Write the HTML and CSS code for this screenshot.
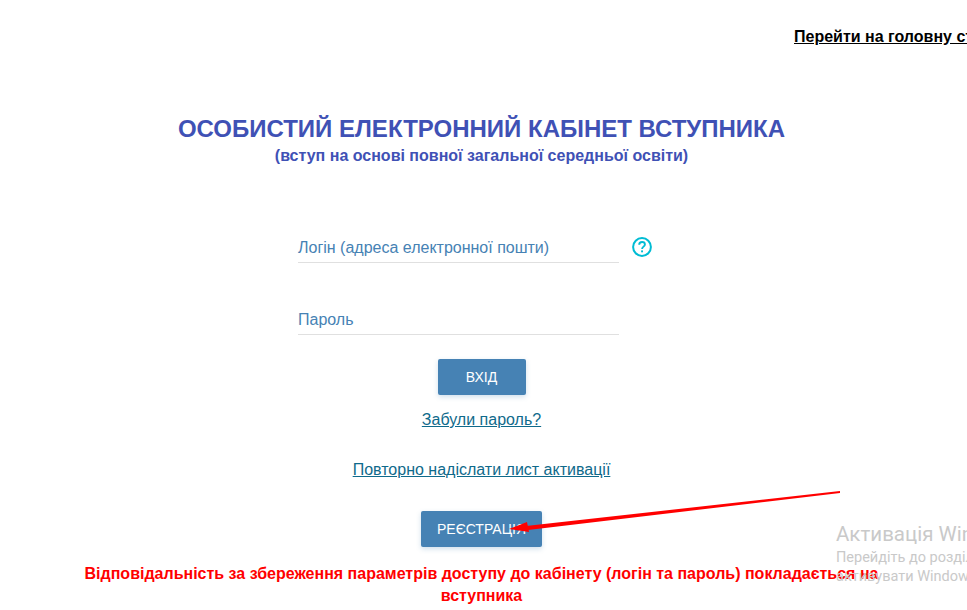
FILE: index.html
```html
<!DOCTYPE html>
<html lang="uk">
<head>
    <meta charset="UTF-8">
    <meta name="viewport" content="width=device-width, initial-scale=1.0">
    <title>Особистий електронний кабінет вступника</title>
    <link rel="stylesheet" href="styles.css">
</head>
<body>
    <div class="top-link">
        <a href="#">Перейти на головну сторінку</a>
    </div>

    <div class="container">
        <h1 class="title">ОСОБИСТИЙ ЕЛЕКТРОННИЙ КАБІНЕТ ВСТУПНИКА</h1>
        <div class="subtitle">(вступ на основі повної загальної середньої освіти)</div>

        <form class="login-form">
            <div class="field">
                <div class="field-label">Логін (адреса електронної пошти)</div>
                <svg class="help-icon" width="20" height="20" viewBox="0 0 20 20" fill="none">
                    <circle cx="10" cy="10" r="8.9" stroke="#00bcd4" stroke-width="2"/>
                    <path d="M7.2 7.8c0-1.7 1.2-2.8 2.9-2.8 1.6 0 2.8 1 2.8 2.4 0 2.2-2.8 2.3-2.8 4.6" stroke="#00bcd4" stroke-width="1.9"/>
                    <rect x="9.1" y="13.4" width="1.9" height="1.9" fill="#00bcd4"/>
                </svg>
            </div>
            <div class="field field-password">
                <div class="field-label">Пароль</div>
            </div>
            <button type="button" class="btn btn-login">ВХІД</button>
            <a class="form-link link-forgot" href="#">Забули пароль?</a>
            <a class="form-link link-resend" href="#">Повторно надіслати лист активації</a>
            <button type="button" class="btn btn-register">РЕЄСТРАЦІЯ</button>
        </form>

        <div class="notice">Відповідальність за збереження параметрів доступу до кабінету (логін та пароль) покладається на вступника</div>
    </div>

    <div class="watermark">
        <div class="watermark-title">Активація Windows</div>
        <div class="watermark-text">Перейдіть до розділу "Настройки", щоб<br>активувати Windows.</div>
    </div>

    <svg class="arrow" width="967" height="610" viewBox="0 0 967 610">
        <polygon points="840,491 840,493 528,530 526,526" fill="#ff0000"/>
        <polygon points="509,529 527,522 529,532" fill="#ff0000"/>
    </svg>
</body>
</html>
```

FILE: styles.css
```css
* {
    margin: 0;
    padding: 0;
    box-sizing: border-box;
}

body {
    background: #fff;
    color: #000;
    font-family: 'Liberation Sans', Arial, sans-serif;
    font-size: 16px;
    height: 610px;
    overflow: hidden;
    position: relative;
}

.top-link {
    padding: 28px 0 0 794px;
    height: 46px;
    white-space: nowrap;
    line-height: 18px;
}

.top-link a {
    color: #000;
    font-weight: bold;
}

.container {
    width: 963px;
    text-align: center;
}

.title {
    margin-top: 69px;
    color: #3f51b5;
    font-size: 24px;
    line-height: 28px;
    font-weight: bold;
}

.subtitle {
    color: #3f51b5;
    font-size: 16px;
    line-height: 18px;
    font-weight: bold;
    margin-top: 4px;
}

.login-form {
    display: flex;
    flex-direction: column;
    align-items: center;
    margin-top: 64px;
}

.field {
    width: 321px;
    height: 34px;
    margin-left: -46px;
    border-bottom: 1px solid #e0e0e0;
    position: relative;
}

.field-password {
    margin-top: 38px;
}

.field-label {
    color: #4682b4;
    text-align: left;
    line-height: 18px;
    padding-top: 10px;
}

.help-icon {
    position: absolute;
    left: 334px;
    top: 8px;
}

.btn {
    background: #4682b4;
    color: #fff;
    border: none;
    border-radius: 2px;
    font-family: 'Liberation Sans', Arial, sans-serif;
    font-size: 14px;
    height: 36px;
    box-shadow: 0 2px 5px rgba(70, 130, 180, 0.25);
}

.btn-login {
    width: 88px;
    margin-top: 24px;
}

.btn-register {
    width: 121px;
    margin-top: 32px;
}

.form-link {
    color: #0f6a8b;
    line-height: 18px;
}

.link-forgot {
    margin-top: 16px;
}

.link-resend {
    margin-top: 32px;
}

.notice {
    color: #ff0000;
    font-weight: bold;
    line-height: 22px;
    margin-top: 16px;
    padding: 0 80px;
}

.watermark {
    position: absolute;
    left: 836px;
    top: 522px;
    white-space: nowrap;
    color: #c9c9c9;
    font-family: 'Roboto', sans-serif;
}

.watermark-title {
    font-size: 20.5px;
    line-height: 24px;
}

.watermark-text {
    font-size: 14.5px;
    line-height: 19px;
    margin-top: 2px;
}

.arrow {
    position: absolute;
    left: 0;
    top: 0;
}
```
